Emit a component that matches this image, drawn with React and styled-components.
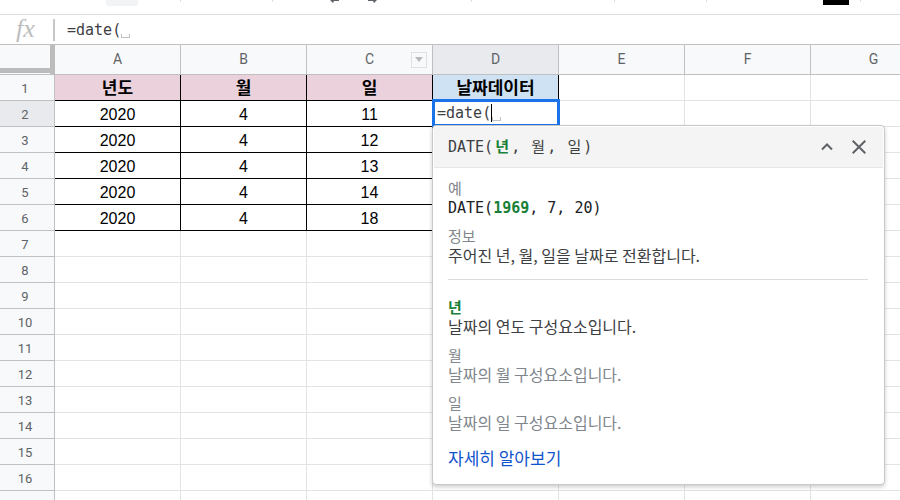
import React from 'react'
import styled, { createGlobalStyle } from 'styled-components'

const GlobalStyle = createGlobalStyle`
  * {
    box-sizing: border-box;
  }

  body {
    margin: 0;
    background: #fff;
    font-family: Roboto, "Noto Sans CJK KR", sans-serif;
  }

  button {
    padding: 0;
    border: 0;
    background: none;
    font: inherit;
  }
`

const mono = '"DejaVu Sans Mono", "Noto Sans CJK KR", monospace'
const korean = '"Noto Sans CJK KR", sans-serif'

const Page = styled.div`
  height: 100vh;
  overflow: hidden;
`

/* ---------- toolbar ---------- */

const Toolbar = styled.div`
  display: flex;
  align-items: flex-start;
  height: 15px;
  border-bottom: 1px solid #dadce0;
  overflow: hidden;
`

const Group = styled.div`
  display: flex;
  flex: none;
  justify-content: ${props => props.$justify || 'center'};
  width: ${props => props.$width}px;
  height: 2px;
  border-right: 1px solid #dadce0;
`

const Chip = styled.button`
  width: 32px;
  height: 6px;
  margin-right: 42px;
  border-radius: 0 0 3px 3px;
  background: #f1f3f4;
`

const ToolButton = styled.button`
  width: 37px;
  height: 3px;

  svg {
    display: block;
    margin: 0 auto;
  }
`

const Swatch = styled.button`
  flex: none;
  width: 26px;
  height: 5px;
  margin-right: 11px;
  background: #000;
`

/* ---------- formula bar ---------- */

const FormulaBar = styled.div`
  display: flex;
  align-items: center;
  height: 29px;
`

const Fx = styled.label`
  width: 55px;
  height: 22px;
  padding-left: 16px;
  border-right: 2px solid #c6c6c6;
  color: #bdbdbd;
  font: italic 26px/20px "Liberation Serif", serif;
`

const FormulaText = styled.div`
  display: flex;
  flex: 1;
  align-items: center;
  padding-left: 12px;
`

const FormulaInput = styled.input`
  width: 54px;
  height: 24px;
  padding: 0;
  border: 0;
  outline: 0;
  background: none;
  color: #3c4043;
  font: 15px/24px ${mono};
`

const Placeholder = styled.span`
  width: 9px;
  height: 4px;
  margin-top: 12px;
  border: 1px solid #c0c0c0;
  border-top: 0;
`

/* ---------- grid ---------- */

const Sheet = styled.table`
  width: max-content;
  min-width: 100%;
  table-layout: fixed;
  border-collapse: separate;
  border-spacing: 0;
  border-top: 1px solid #c0c0c0;
`

const IndexCol = styled.col`
  width: 55px;
`

const DataCol = styled.col`
  width: 126px;
`

const Corner = styled.td`
  height: 30px;
  padding: 0;
  border-right: 5px solid #bcbcbc;
  border-bottom: 1px solid #c0c0c0;
  background: #f8f9fa;
  vertical-align: top;
`

const FrozenHandle = styled.div`
  height: 28px;
  border-bottom: 5px solid #bcbcbc;
`

const ColHead = styled.th`
  height: 30px;
  padding: 0;
  border-right: 1px solid #c0c0c0;
  border-bottom: 1px solid #c0c0c0;
  background: ${props => (props.$active ? '#e8eaed' : '#f8f9fa')};
  color: #5f6368;
  font: 14px/29px Roboto, sans-serif;
`

const HeadInner = styled.div`
  display: grid;
  grid-template-columns: 1fr auto 1fr;
  align-items: center;
`

const Dropdown = styled.button`
  grid-column: 3;
  justify-self: end;
  width: 16px;
  height: 16px;
  margin-right: 5px;
  border: 1px solid #e0e0e0;

  svg {
    display: block;
    margin: 0 auto;
  }
`

const RowHead = styled.th`
  height: 26px;
  padding: 2px 4px 0 0;
  border-right: 1px solid #c0c0c0;
  border-bottom: 1px solid #c0c0c0;
  background: ${props => (props.$active ? '#e8eaed' : '#f8f9fa')};
  color: #5f6368;
  font: 13px/23px Roboto, sans-serif;
`

const Cell = styled.td`
  position: relative;
  height: 26px;
  padding: 2px 0 0;
  border-right: 1px solid ${props => (props.$boxed ? '#000' : '#e2e3e3')};
  border-bottom: 1px solid ${props => (props.$boxed ? '#000' : '#e2e3e3')};
  background: ${props => props.$fill || '#fff'};
  color: #000;
  font: ${props => (props.$fill ? 'bold 17px' : '16px')}/23px "Liberation Sans", ${korean};
  text-align: center;
`

const Editor = styled.div`
  position: absolute;
  top: -2px;
  left: -1px;
  z-index: 1;
  display: flex;
  align-items: center;
  width: 128px;
  height: 28px;
  padding-left: 2px;
  border: 3px solid #1a73e8;
  background: #fff;
`

const Caret = styled.span`
  width: 1px;
  height: 18px;
  background: #000;
`

/* ---------- formula help ---------- */

const Help = styled.section`
  position: absolute;
  top: 24px;
  left: -1px;
  z-index: 2;
  width: 453px;
  padding: 1px;
  border: 1px solid #c8c8c8;
  border-radius: 4px;
  background: #fff;
  box-shadow: 0 2px 4px rgba(0, 0, 0, 0.2);
  color: #3c4043;
  text-align: left;
`

const HelpHeader = styled.header`
  display: flex;
  align-items: center;
  height: 41px;
  padding: 0 8px 0 14px;
  border-bottom: 1px solid #e6e6e6;
  border-radius: 3px 3px 0 0;
  background: #f4f4f4;
`

const Signature = styled.code`
  flex: 1;
  font: 15px/20px ${mono};
`

const Arg = styled.span`
  display: inline-block;
  width: 18px;
  color: ${props => (props.$active ? '#188038' : 'inherit')};
  font-weight: ${props => (props.$active ? 'bold' : 'normal')};
  text-align: center;
`

const IconButton = styled.button`
  width: 32px;
  height: 32px;

  svg {
    display: block;
    margin: 0 auto;
  }
`

const HelpBody = styled.div`
  padding: 11px 15px 13px 14px;
`

const Label = styled.h4`
  margin: 0;
  color: ${props => (props.$active ? '#188038' : '#80868b')};
  font: ${props => (props.$active ? 'bold' : 'normal')} 15px/18px ${korean};
`

const Example = styled.code`
  display: block;
  margin-bottom: 8px;
  color: #202124;
  font: 15px/22px ${mono};

  b {
    color: #188038;
  }
`

const Text = styled.p`
  margin: 0 0 10px;
  color: ${props => (props.$muted ? '#80868b' : '#3c4043')};
  font: 16px/20px ${korean};
`

const Divider = styled.hr`
  margin: 14px 0 18px;
  border: 0;
  border-top: 1px solid #dadce0;
`

const LearnMore = styled.a`
  display: block;
  width: fit-content;
  margin-top: 14px;
  color: #1155cc;
  font: 17px/24px ${korean};
  text-decoration: none;
`

const columns = ['A', 'B', 'C', 'D', 'E', 'F', 'G']
const rowCount = 17

const headings = ['년도', '월', '일', '날짜데이터']
const records = [
  [2020, 4, 11],
  [2020, 4, 12],
  [2020, 4, 13],
  [2020, 4, 14],
  [2020, 4, 18],
]

const params = [
  { name: '년', text: '날짜의 연도 구성요소입니다.', active: true },
  { name: '월', text: '날짜의 월 구성요소입니다.' },
  { name: '일', text: '날짜의 일 구성요소입니다.' },
]

const FormulaHelp = () => (
  <Help>
    <HelpHeader>
      <Signature>
        DATE(
        {params.map((param, i) => (
          <React.Fragment key={param.name}>
            {i > 0 && ', '}
            <Arg $active={param.active}>{param.name}</Arg>
          </React.Fragment>
        ))}
        )
      </Signature>
      <IconButton aria-label="접기">
        <svg width="12" height="8" viewBox="0 0 12 8" fill="none" stroke="#5f6368" strokeWidth="2">
          <path d="M1 6.5 L6 1.5 L11 6.5" />
        </svg>
      </IconButton>
      <IconButton aria-label="닫기">
        <svg width="14" height="14" viewBox="0 0 14 14" fill="none" stroke="#5f6368" strokeWidth="2">
          <path d="M0.7 0.7 L13.3 13.3 M13.3 0.7 L0.7 13.3" />
        </svg>
      </IconButton>
    </HelpHeader>
    <HelpBody>
      <Label>예</Label>
      <Example>DATE(<b>1969</b>, 7, 20)</Example>
      <Label>정보</Label>
      <Text>주어진 년, 월, 일을 날짜로 전환합니다.</Text>
      <Divider />
      {params.map(param => (
        <React.Fragment key={param.name}>
          <Label $active={param.active}>{param.name}</Label>
          <Text $muted={!param.active}>{param.text}</Text>
        </React.Fragment>
      ))}
      <LearnMore href="#learn">자세히 알아보기</LearnMore>
    </HelpBody>
  </Help>
)

const GridCell = ({ row, col }) => {
  if (row === 1 && col < headings.length) {
    return <Cell $boxed $fill={col < 3 ? '#ead1dc' : '#cfe2f3'}>{headings[col]}</Cell>
  }
  if (row === 2 && col === 3) {
    return (
      <Cell>
        <Editor>
          <FormulaInput aria-label="D2" defaultValue="=date(" />
          <Caret />
          <Placeholder />
        </Editor>
        <FormulaHelp />
      </Cell>
    )
  }
  const record = records[row - 2]
  if (record && col < 3) {
    return <Cell $boxed>{record[col]}</Cell>
  }
  return <Cell />
}

const App = () => (
  <Page>
    <GlobalStyle />
    <Toolbar>
      <Group $width={181} $justify="flex-end">
        <Chip aria-label="도구" />
      </Group>
      <Group $width={92} />
      <Group $width={199}>
        <ToolButton aria-label="왼쪽">
          <svg width="12" height="3" viewBox="0 0 12 3">
            <path d="M1 0 L4 3 L5 1 H10 V0 Z" fill="#5f6368" />
          </svg>
        </ToolButton>
        <ToolButton aria-label="오른쪽">
          <svg width="12" height="3" viewBox="0 0 12 3">
            <path d="M11 0 L8 3 L7 1 H2 V0 Z" fill="#5f6368" />
          </svg>
        </ToolButton>
        <ToolButton as="span" />
      </Group>
      <Group $width={143} />
      <Group $width={92} />
      <Group $width={154} $justify="flex-end">
        <Swatch aria-label="색상" />
      </Group>
    </Toolbar>
    <FormulaBar>
      <Fx htmlFor="formula">fx</Fx>
      <FormulaText>
        <FormulaInput id="formula" defaultValue="=date(" />
        <Placeholder />
      </FormulaText>
    </FormulaBar>
    <Sheet>
      <colgroup>
        <IndexCol />
        {columns.map(name => <DataCol key={name} />)}
      </colgroup>
      <thead>
        <tr>
          <Corner>
            <FrozenHandle />
          </Corner>
          {columns.map(name => (
            <ColHead key={name} scope="col" $active={name === 'D'}>
              <HeadInner>
                <span />
                {name}
                {name === 'C' && (
                  <Dropdown aria-label="C 열 메뉴">
                    <svg width="8" height="5" viewBox="0 0 8 5">
                      <path d="M0 0 H8 L4 5 Z" fill="#b8b8b8" />
                    </svg>
                  </Dropdown>
                )}
              </HeadInner>
            </ColHead>
          ))}
        </tr>
      </thead>
      <tbody>
        {Array.from({ length: rowCount }, (_, i) => i + 1).map(row => (
          <tr key={row}>
            <RowHead scope="row" $active={row === 2}>{row}</RowHead>
            {columns.map((name, col) => <GridCell key={name} row={row} col={col} />)}
          </tr>
        ))}
      </tbody>
    </Sheet>
  </Page>
)

export default App
